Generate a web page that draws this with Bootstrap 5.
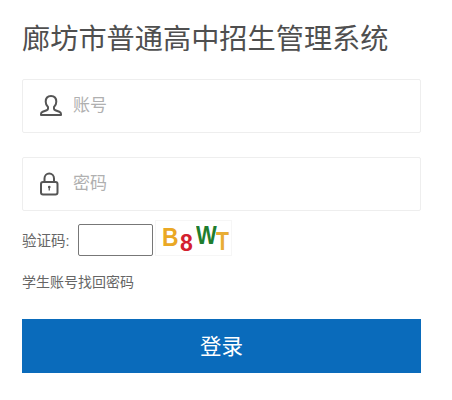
<!DOCTYPE html>
<html lang="zh-CN">
<head>
<meta charset="utf-8">
<link href="https://cdn.jsdelivr.net/npm/bootstrap@5.3.0/dist/css/bootstrap.min.css" rel="stylesheet">
<style>
html,body{height:400px;overflow:hidden}
body{background:#fff;color:#555;font-family:"Liberation Sans","Noto Sans CJK SC",sans-serif;font-size:14px}
.login-wrap{width:399px;margin-left:22px;padding-top:21px}
.login-title{font-size:28.2px;line-height:36px;font-weight:400;color:#4f4f4f;margin:0 0 22px;white-space:nowrap}
.field-box{height:54px;border:1px solid #eee;border-radius:2px;padding-left:17px;margin-bottom:24px;background:#fff}
.field-box input{border:0;outline:0;background:transparent;font-size:17px;color:#555;width:300px;padding:0;margin-left:9px}
.field-box input::placeholder{color:#b0b0b0;opacity:1}
.field-box svg{flex:none}
.captcha-row{height:36px;margin-top:-15px;margin-bottom:16px}
.captcha-label{width:56px;color:#666;padding-top:11px;white-space:nowrap;font-size:14.500px}
.captcha-input{width:75px;height:32px;border:1px solid #777;border-radius:2px;margin-top:4px;outline:0}
.captcha-img{width:77px;height:36px;margin-left:2px;border:1px solid #f6f6f6;font-weight:700;padding-left:6px;line-height:1;white-space:nowrap;overflow:hidden}
.captcha-img span{display:block;flex:none;transform-origin:left top}
.cap-b{color:#eaa825;font-size:26px;margin-top:3px;width:18px;transform:scaleX(.88)}
.cap-8{color:#d3202f;font-size:23px;margin-top:11px;width:16px}
.cap-w{color:#1f7d2e;font-size:25px;margin-top:2px;width:20px;transform:scaleX(.88)}
.cap-t{color:#e8ad34;font-size:25px;margin-top:8px;width:14px;transform:scaleX(.85)}
.find-link{display:block;color:#666;text-decoration:none;line-height:20px;height:20px;white-space:nowrap}
.login-btn{display:block;width:100%;height:54px;margin-top:27px;background:#0a6bbb;color:#fff;border:0;border-radius:0;font-size:21.5px;padding:2px 0 0}
</style>
</head>
<body>
<form class="login-wrap">
  <h1 class="login-title">廊坊市普通高中招生管理系统</h1>
  <div class="field-box d-flex align-items-center">
    <svg width="24" height="24" viewBox="0 0 24 24" fill="none" stroke="#555" stroke-width="2" stroke-linejoin="round" stroke-linecap="round"><path d="M11 2c-3.500 0-5.300 2.500-5.300 5.700 0 2.300 1 4.100 2.300 5.300v1.800c0 .7-.5 1.100-1.300 1.400l-4 1.600c-1 .4-1.700 1.100-1.700 2.200v1h20v-1c0-1.100-.7-1.800-1.700-2.200l-4-1.600c-.8-.3-1.300-.7-1.300-1.400v-1.800c1.300-1.200 2.300-3 2.300-5.300 0-3.200-1.800-5.700-5.300-5.700z"/></svg>
    <input type="text" placeholder="账号">
  </div>
  <div class="field-box d-flex align-items-center">
    <svg width="24" height="24" viewBox="0 0 24 24" fill="none" stroke="#555" stroke-width="2"><rect x="1" y="10" width="16.500" height="12.500" rx="2"/><path d="M4.500 10V6.500a4.750 5 0 0 1 9.500 0V10"/><circle cx="9.250" cy="15" r="1.300" fill="#555" stroke="none"/><path d="M9.250 15v3.500" stroke-width="1.300"/></svg>
    <input type="password" placeholder="密码">
  </div>
  <div class="captcha-row d-flex align-items-start">
    <label class="captcha-label">验证码:</label>
    <input class="captcha-input" type="text">
    <div class="captcha-img d-flex align-items-start">
      <span class="cap-b">B</span><span class="cap-8">8</span><span class="cap-w">W</span><span class="cap-t">T</span>
    </div>
  </div>
  <a class="find-link" href="#">学生账号找回密码</a>
  <button type="button" class="btn login-btn">登录</button>
</form>
<script src="https://cdn.jsdelivr.net/npm/bootstrap@5.3.0/dist/js/bootstrap.bundle.min.js"></script>
</body>
</html>
